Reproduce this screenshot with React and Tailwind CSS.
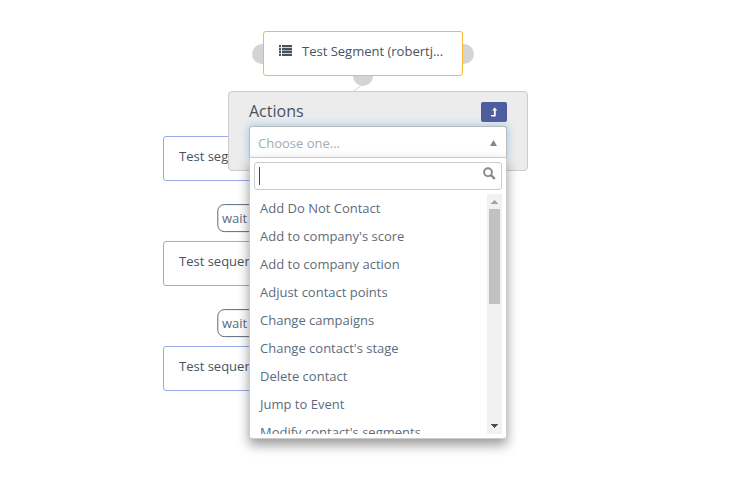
const OPTIONS = [
  "Add Do Not Contact",
  "Add to company's score",
  "Add to company action",
  "Adjust contact points",
  "Change campaigns",
  "Change contact's stage",
  "Delete contact",
  "Jump to Event",
  "Modify contact's segments",
];

function EventNode({ label }) {
  return (
    <div className="h-[45px] w-[200px] rounded-[3px] border border-[#9ba8e8] bg-white pl-[15px] pt-[9px] text-[13px] leading-[20px] text-[#47535f]">
      {label}
    </div>
  );
}

function WaitLabel() {
  return (
    <div className="relative mb-[9px] mt-[23px] flex h-[28px] w-[92px] self-center">
      <svg width="92" height="29" viewBox="0 0 92 29" className="absolute inset-0 overflow-visible">
        <rect x="0.8" y="0.6" width="90" height="27" rx="6.5" fill="#fff" stroke="#5d6c7c" />
      </svg>
      <span className="relative pl-[5px] text-[13px] leading-[28px] text-[#5d6c7c]">wait</span>
    </div>
  );
}

function ListIcon() {
  return (
    <svg width="13" height="11" viewBox="0 0 13 11" fill="#47535f" className="mt-[4px] shrink-0">
      <path d="M0 0h2v2.3H0zM3 0h10v2.3H3zM0 2.9h2v2.3H0zM3 2.9h10v2.3H3zM0 5.8h2v2.3H0zM3 5.8h10v2.3H3zM0 8.7h2V11H0zM3 8.7h10V11H3z" />
    </svg>
  );
}

function SourceNode() {
  return (
    <div className="absolute left-[263px] top-[31px] h-[45px] w-[200px]">
      <div className="absolute -left-[11px] top-[13px] h-[20px] w-[20px] rounded-full bg-[#d4d4d4]" />
      <div className="absolute -right-[11px] top-[13px] h-[20px] w-[20px] rounded-full bg-[#d4d4d4]" />
      <div className="absolute left-[90px] top-[35px] h-[20px] w-[20px] rounded-full bg-[#d4d4d4]" />
      <div className="relative flex h-full rounded-[3px] border border-[#fdb933] bg-white pl-[15px] pt-[9px] text-[13px] leading-[20px] text-[#47535f]">
        <ListIcon />
        <span className="ml-[10px] whitespace-nowrap">Test Segment (robertj...</span>
      </div>
    </div>
  );
}

function Scrollbar() {
  return (
    <div className="flex w-[15px] shrink-0 flex-col items-center bg-[#f1f1f1]">
      <svg width="15" height="15" viewBox="0 0 15 15" fill="#a3a3a3" shapeRendering="crispEdges">
        <path d="M7 6h1v1h1v1h1v1h1v1H4V9h1V8h1V7h1z" />
      </svg>
      <div className="h-[95px] w-[11px] bg-[#c1c1c1]" />
      <svg width="15" height="15" viewBox="0 0 15 15" fill="#505050" shapeRendering="crispEdges" className="mt-auto">
        <path d="M4 5h7v1h-1v1H9v1H8v1H7V8H6V7H5V6H4z" />
      </svg>
    </div>
  );
}

function SelectDropdown() {
  return (
    <div className="relative -mt-px flex h-[282px] w-[258px] flex-col rounded-b-[3px] border border-[#ccc] bg-white px-[4px] pt-[4px] shadow-[0_6px_12px_rgba(0,0,0,0.4)]">
      <div className="flex h-[28px] shrink-0 items-start justify-between rounded-[3px] border border-[#ccc] bg-white pl-[4px] pr-[5px]">
        <span className="mt-[4px] h-[18px] w-px bg-[#34495e]" />
        <svg width="13" height="13" viewBox="0 0 13 13" fill="none" stroke="#888" className="mt-[4px]">
          <circle cx="5" cy="5.2" r="3.9" strokeWidth="1.9" />
          <path d="M8 8.2l3.8 3.8" strokeWidth="2.4" />
        </svg>
      </div>
      <div className="mt-[4px] flex h-[240px] overflow-hidden">
        <ul className="flex-1 pl-[6px]">
          {OPTIONS.map((option) => (
            <li key={option} className="h-[28px] whitespace-nowrap text-[13px] leading-[28px] text-[#5d6c7c]">
              {option}
            </li>
          ))}
        </ul>
        <Scrollbar />
      </div>
    </div>
  );
}

function ActionsPanel() {
  return (
    <div className="absolute left-[228px] top-[91px] h-[80px] w-[300px] rounded-[4px] border border-[#ccc] bg-[#ececec] px-[20px] pt-[10px]">
      <div className="flex h-[24px] items-start justify-between">
        <h2 className="-mt-px text-[16px] leading-[20px] text-[#47535f]">Actions</h2>
        <button className="flex h-[20px] w-[26px] items-center justify-center rounded-[2px] bg-[#4e5d9d]">
          <svg width="8" height="10" viewBox="0 0 8 10" fill="#fff">
            <path d="M4.7 0.4L7.3 3.6H5.7V9.4H1.5L0.7 7.9H3.9V3.6H2.1z" />
          </svg>
        </button>
      </div>
      <div className="flex h-[32px] w-[258px] items-start justify-between rounded-t-[3px] border border-b-0 border-[#bbb] bg-white pl-[8px] pr-[9px] text-[13px] text-[#a1adba] shadow-[0_0_8px_rgba(82,168,236,0.6)]">
        <span className="mt-[6px] leading-[20px]">Choose one...</span>
        <svg width="7" height="6" viewBox="0 0 7 6" fill="#888" className="mt-[13px]">
          <path d="M3.5 0L7 6H0z" />
        </svg>
      </div>
      <SelectDropdown />
    </div>
  );
}

export default function App() {
  return (
    <main className="relative h-[500px] w-[750px] overflow-hidden bg-white font-['Open_Sans','Noto_Sans',sans-serif]">
      <svg width="750" height="500" className="absolute inset-0" fill="none" stroke="#d4d4d4">
        <path d="M363 84L343 100" />
      </svg>
      <SourceNode />
      <div className="absolute left-[163px] top-[136px] flex w-[200px] flex-col">
        <EventNode label="Test seg" />
        <WaitLabel />
        <EventNode label="Test sequen" />
        <WaitLabel />
        <EventNode label="Test sequen" />
      </div>
      <ActionsPanel />
    </main>
  );
}
